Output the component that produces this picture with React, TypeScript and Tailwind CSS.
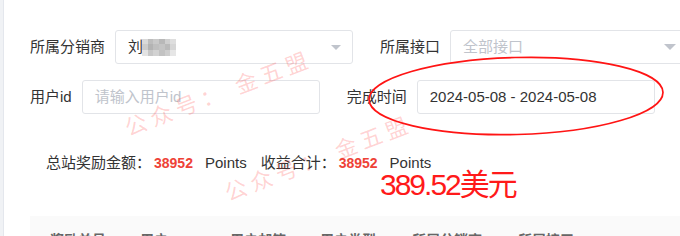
import React from 'react';

// 打码用のモザイク色
const mosaic = [
    '#d9d9d9', '#bdbdbd', '#c9c9c9', '#b8b8b8', '#cfcfcf', '#dedede',
    '#cccccc', '#b3b3b3', '#bfbfbf', '#c4c4c4', '#bababa', '#d6d6d6',
    '#e3e3e3', '#c7c7c7', '#d2d2d2', '#c2c2c2', '#cdcdcd', '#e6e6e6',
];

const Caret = ({ big }: { big?: boolean }) => (
    <span
        className={
            big
                ? 'ml-auto mr-[11px] border-x-[6px] border-t-[6px] border-x-transparent border-t-[#c0c4cc]'
                : 'ml-auto mr-[11px] border-x-[5px] border-t-[5px] border-x-transparent border-t-[#c0c4cc]'
        }
    />
);

const FormItem = ({ label, children }: { label: string; children: React.ReactNode }) => (
    <div className="flex items-center mr-[27px] shrink-0">
        <span className="pr-[10px] text-[15px] text-[#333]">{label}</span>
        {children}
    </div>
);

const Box = ({ children }: { children: React.ReactNode }) => (
    <div className="flex items-center w-[238px] h-[34px] shrink-0 border border-[#e2e4e8] rounded-[3px] pl-3 text-[15px] bg-white">
        {children}
    </div>
);

const headers = [
    { t: '奖励单号', w: 'w-[90px]' },
    { t: '用户', w: 'w-[90px]' },
    { t: '用户邮箱', w: 'w-[90px]' },
    { t: '用户类型', w: 'w-[92px]' },
    { t: '所属分销商', w: 'w-[106px]' },
    { t: '所属接口', w: 'w-[120px]' },
];

const Watermark = ({ pos }: { pos: string }) => (
    <div
        className={`absolute ${pos} -translate-x-1/2 -translate-y-1/2 -rotate-[21deg] text-[22px] tracking-[5px] whitespace-nowrap text-[rgba(255,30,30,0.2)] pointer-events-none font-['Noto_Sans_CJK_SC',sans-serif]`}
    >
        公众号： 金五盟
    </div>
);

export default function App() {
    return (
        <div className="relative w-[680px] h-[236px] overflow-hidden bg-white flex font-['Liberation_Sans','Noto_Sans_CJK_SC',sans-serif]">
            {/* 左側のサイドバー境界 */}
            <div className="w-[4px] shrink-0 bg-[#f0f2f5] border-r border-[#e4e7ed]" />

            <div className="flex-1 min-w-0 pl-[26px] pt-[30px]">
                {/* 1行目 */}
                <div className="flex items-center whitespace-nowrap">
                    <FormItem label="所属分销商">
                        <Box>
                            <span className="text-[#333]">刘</span>
                            <span className="grid grid-cols-6 w-[34px] h-[17px] -ml-[1px]">
                                {mosaic.map((c, i) => (
                                    <span key={i} style={{ backgroundColor: c }} />
                                ))}
                            </span>
                            <Caret />
                        </Box>
                    </FormItem>
                    <FormItem label="所属接口">
                        <Box>
                            <span className="text-[#c0c4cc]">全部接口</span>
                            <Caret big />
                        </Box>
                    </FormItem>
                </div>

                {/* 2行目 */}
                <div className="flex items-center whitespace-nowrap mt-4">
                    <FormItem label="用户id">
                        <Box>
                            <span className="text-[#c0c4cc]">请输入用户id</span>
                        </Box>
                    </FormItem>
                    <FormItem label="完成时间">
                        <Box>
                            <span className="text-[#333]">2024-05-08 - 2024-05-08</span>
                        </Box>
                    </FormItem>
                </div>

                {/* 集計 */}
                <div className="mt-[39px] pl-4 h-5 leading-5 flex items-center text-[15px] text-[#333] whitespace-nowrap">
                    <span>总站奖励金额：</span>
                    <span className="ml-[3px] text-[14px] font-bold text-[#ee4237]">38952</span>
                    <span className="ml-3">Points</span>
                    <span className="ml-[14px]">收益合计：</span>
                    <span className="ml-[3px] text-[14px] font-bold text-[#ee4237]">38952</span>
                    <span className="ml-3">Points</span>
                </div>

                {/* テーブルヘッダー */}
                <div className="mt-[43px] h-[40px] bg-[#fafafa] flex pl-5 pt-[14px] text-[14px] leading-5 font-bold text-[#666] whitespace-nowrap">
                    {headers.map((h) => (
                        <span key={h.t} className={`${h.w} shrink-0`}>
                            {h.t}
                        </span>
                    ))}
                </div>
            </div>

            {/* 透かし */}
            <Watermark pos="left-[218px] top-[92px]" />
            <Watermark pos="left-[318px] top-[157px]" />

            {/* 赤ペンの注記 */}
            <svg className="absolute left-0 top-0 pointer-events-none" width="680" height="236">
                <ellipse
                    cx="516"
                    cy="96"
                    rx="147"
                    ry="38.5"
                    transform="rotate(-1.5 516 96)"
                    fill="none"
                    stroke="#ff1414"
                    strokeWidth="1.7"
                />
            </svg>
            <div className="absolute left-[380px] top-[170px] text-[30px] leading-[30px] tracking-[-2px] text-[#ff1a1a] whitespace-nowrap">
                389.52美元
            </div>
        </div>
    );
}
